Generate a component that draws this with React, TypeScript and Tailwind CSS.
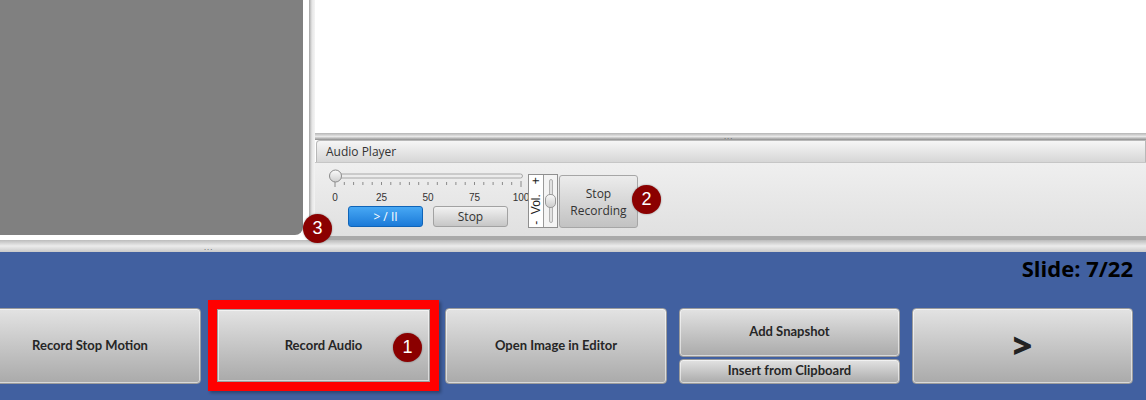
import React from 'react';

const ui = { fontFamily: '"Open Sans", "Liberation Sans", sans-serif' };

function Badge({ n, className }: { n: number; className: string }) {
  return (
    <div
      className={`absolute w-[29px] h-[29px] rounded-full bg-[#8b0000] text-white text-[18px] leading-[29px] text-center shadow-[0_0_2px_rgba(0,0,0,0.4)] ${className}`}
      style={{ fontFamily: '"Liberation Sans", sans-serif' }}
    >
      {n}
    </div>
  );
}

function SeekSlider() {
  const ticks = Array.from({ length: 21 }, (_, i) => 6 + i * 9.3);
  const labels = [0, 25, 50, 75, 100];
  return (
    <svg width="200" height="36" className="overflow-visible block">
      <rect x="0.5" y="6" width="193" height="4" rx="2" fill="#ececec" stroke="#a8a8a8" />
      {ticks.map((x, i) => (
        <line
          key={i}
          x1={x}
          x2={x}
          y1={i === 0 || i === 20 ? 13 : 14}
          y2={i === 0 || i === 20 ? 19 : 17}
          stroke="#8a8a8a"
          strokeWidth="1"
        />
      ))}
      {labels.map((l, i) => (
        <text
          key={l}
          x={6 + i * 46.5}
          y="33"
          fontSize="10"
          textAnchor="middle"
          fill="#333"
          fontFamily='"Liberation Sans", sans-serif'
        >
          {l}
        </text>
      ))}
      <defs>
        <linearGradient id="thumb" x1="0" y1="0" x2="0" y2="1">
          <stop offset="0" stopColor="#fbfbfb" />
          <stop offset="1" stopColor="#cfcfcf" />
        </linearGradient>
      </defs>
      <circle cx="6.5" cy="8" r="6" fill="url(#thumb)" stroke="#8c8c8c" />
    </svg>
  );
}

function VolumeBox() {
  return (
    <div className="relative z-10 mt-[6px] flex w-[30px] h-[54px] bg-white border border-[#8f8f8f]">
      <div className="w-[15px] h-full border-r border-[#9a9a9a] flex items-center justify-center overflow-hidden">
        <span
          className="whitespace-nowrap text-[12px] text-[#222] -rotate-90 block"
          style={{ fontFamily: '"Liberation Sans", sans-serif' }}
        >
          -&nbsp;&nbsp;Vol.&nbsp;&nbsp;&nbsp;+
        </span>
      </div>
      <div className="flex-1 relative flex justify-center bg-[#f4f4f4]">
        <div className="w-[4px] mt-[4px] mb-[4px] rounded-full bg-[#e2e2e2] border border-[#b0b0b0]" />
        <div className="absolute left-[1px] top-[19px] w-[11px] h-[14px] rounded-[5px] bg-gradient-to-b from-[#f8f8f8] to-[#cdcdcd] border border-[#9a9a9a]" />
      </div>
    </div>
  );
}

function BigButton({ children, className = '' }: { children: React.ReactNode; className?: string }) {
  return (
    <div
      className={`flex items-center justify-center rounded-[4px] border border-[#9c9c9c] bg-gradient-to-b from-[#e3e3e3] to-[#aaaaaa] shadow-[inset_0_0_0_1px_rgba(255,255,255,0.55)] text-[13px] font-bold text-[#262626] ${className}`}
      style={{ fontFamily: 'Lato, "Open Sans", sans-serif' }}
    >
      {children}
    </div>
  );
}

export default function App() {
  return (
    <div className="relative w-[1146px] h-[400px] overflow-hidden bg-[#4160a0]" style={ui}>
      {/* top work area */}
      <div className="flex h-[240px] bg-white">
        <div className="w-[309px] h-full bg-white pr-[6px] pb-[5px]">
          <div className="w-full h-full bg-[#808080] rounded-br-[8px]" />
        </div>
        <div className="w-[6px] h-full bg-gradient-to-r from-[#a6a6a6] via-[#e6e6e6] to-[#f4f4f4]" />
        <div className="flex-1 flex flex-col">
          <div className="h-[133px] bg-white" />
          <div className="relative h-[7px] bg-gradient-to-b from-[#b5b5b5] via-[#e8e8e8] to-[#8e8e8e]">
            <div className="absolute left-[409px] top-[1px] text-[8px] leading-[4px] tracking-[1px] text-[#666]">...</div>
          </div>
          <div className="ml-[1px] h-[22px] rounded-tl-[4px] border border-b-0 border-[#b8b8b8] bg-gradient-to-b from-[#f6f6f6] to-[#d6d6d6] pl-[9px] flex items-center text-[12px] text-[#333]">
            Audio Player
          </div>
          <div className="flex-1 flex items-start bg-gradient-to-b from-[#efefef] to-[#e0e0e0] border-t border-[#c6c6c6] pl-[14px] pt-[5px]">
            <div className="w-[199px] flex flex-col">
              <SeekSlider />
              <div className="flex mt-[2px] ml-[19px] gap-[10px]">
                <div className="w-[75px] h-[21px] rounded-[3px] border border-[#0f64b8] bg-gradient-to-b from-[#47a8f4] to-[#1a7ad8] text-white text-[12px] flex items-center justify-center">
                  &gt; / II
                </div>
                <div className="w-[75px] h-[21px] rounded-[3px] border border-[#a2a2a2] bg-gradient-to-b from-[#f2f2f2] to-[#c6c6c6] text-[#333] text-[12px] flex items-center justify-center">
                  Stop
                </div>
              </div>
            </div>
            <VolumeBox />
            <div className="mt-[7px] ml-[1px] w-[79px] h-[53px] rounded-[3px] border border-[#a6a6a6] bg-gradient-to-b from-[#ececec] to-[#c2c2c2] text-[12px] leading-[17px] text-[#333] flex flex-col items-center justify-center">
              <span>Stop</span>
              <span>Recording</span>
            </div>
          </div>
          <div className="h-[4px] bg-[#a9a9a9]" />
        </div>
      </div>

      {/* splitter */}
      <div className="relative h-[12px] bg-gradient-to-b from-[#bcbcbc] via-[#ececec] to-[#c9c9c9]">
        <div className="absolute left-[204px] top-[3px] text-[8px] leading-[8px] tracking-[1px] text-[#666]">...</div>
      </div>

      {/* bottom bar */}
      <div className="flex flex-col">
        <div className="flex justify-end pr-[13px] h-[48px]">
          <span className="text-[22px] font-bold text-black" style={{ fontFamily: '"Open Sans", sans-serif' }}>
            Slide: 7/22
          </span>
        </div>
        <div className="flex items-center h-[91px]">
          <BigButton className="ml-[-21px] w-[222px] h-[76px]">Record Stop Motion</BigButton>
          <div className="ml-[7px] w-[231px] h-[91px] border-[9px] border-[#ff0000] bg-[#ff0000] shadow-[2px_2px_3px_rgba(0,0,0,0.3)]">
            <BigButton className="w-full h-full rounded-none">Record Audio</BigButton>
          </div>
          <BigButton className="ml-[6px] w-[222px] h-[76px]">Open Image in Editor</BigButton>
          <div className="ml-[12px] w-[221px] h-[76px] flex flex-col gap-[2px]">
            <BigButton className="h-[49px]">Add Snapshot</BigButton>
            <BigButton className="h-[25px] text-[12px]">Insert from Clipboard</BigButton>
          </div>
          <BigButton className="ml-[12px] w-[221px] h-[76px]">
            <span className="text-[34px] font-black text-[#222]" style={{ fontFamily: '"Open Sans", sans-serif' }}>
              &gt;
            </span>
          </BigButton>
        </div>
      </div>

      <Badge n={3} className="left-[303px] top-[214px]" />
      <Badge n={2} className="left-[632px] top-[185px]" />
      <Badge n={1} className="left-[393px] top-[333px]" />
    </div>
  );
}
